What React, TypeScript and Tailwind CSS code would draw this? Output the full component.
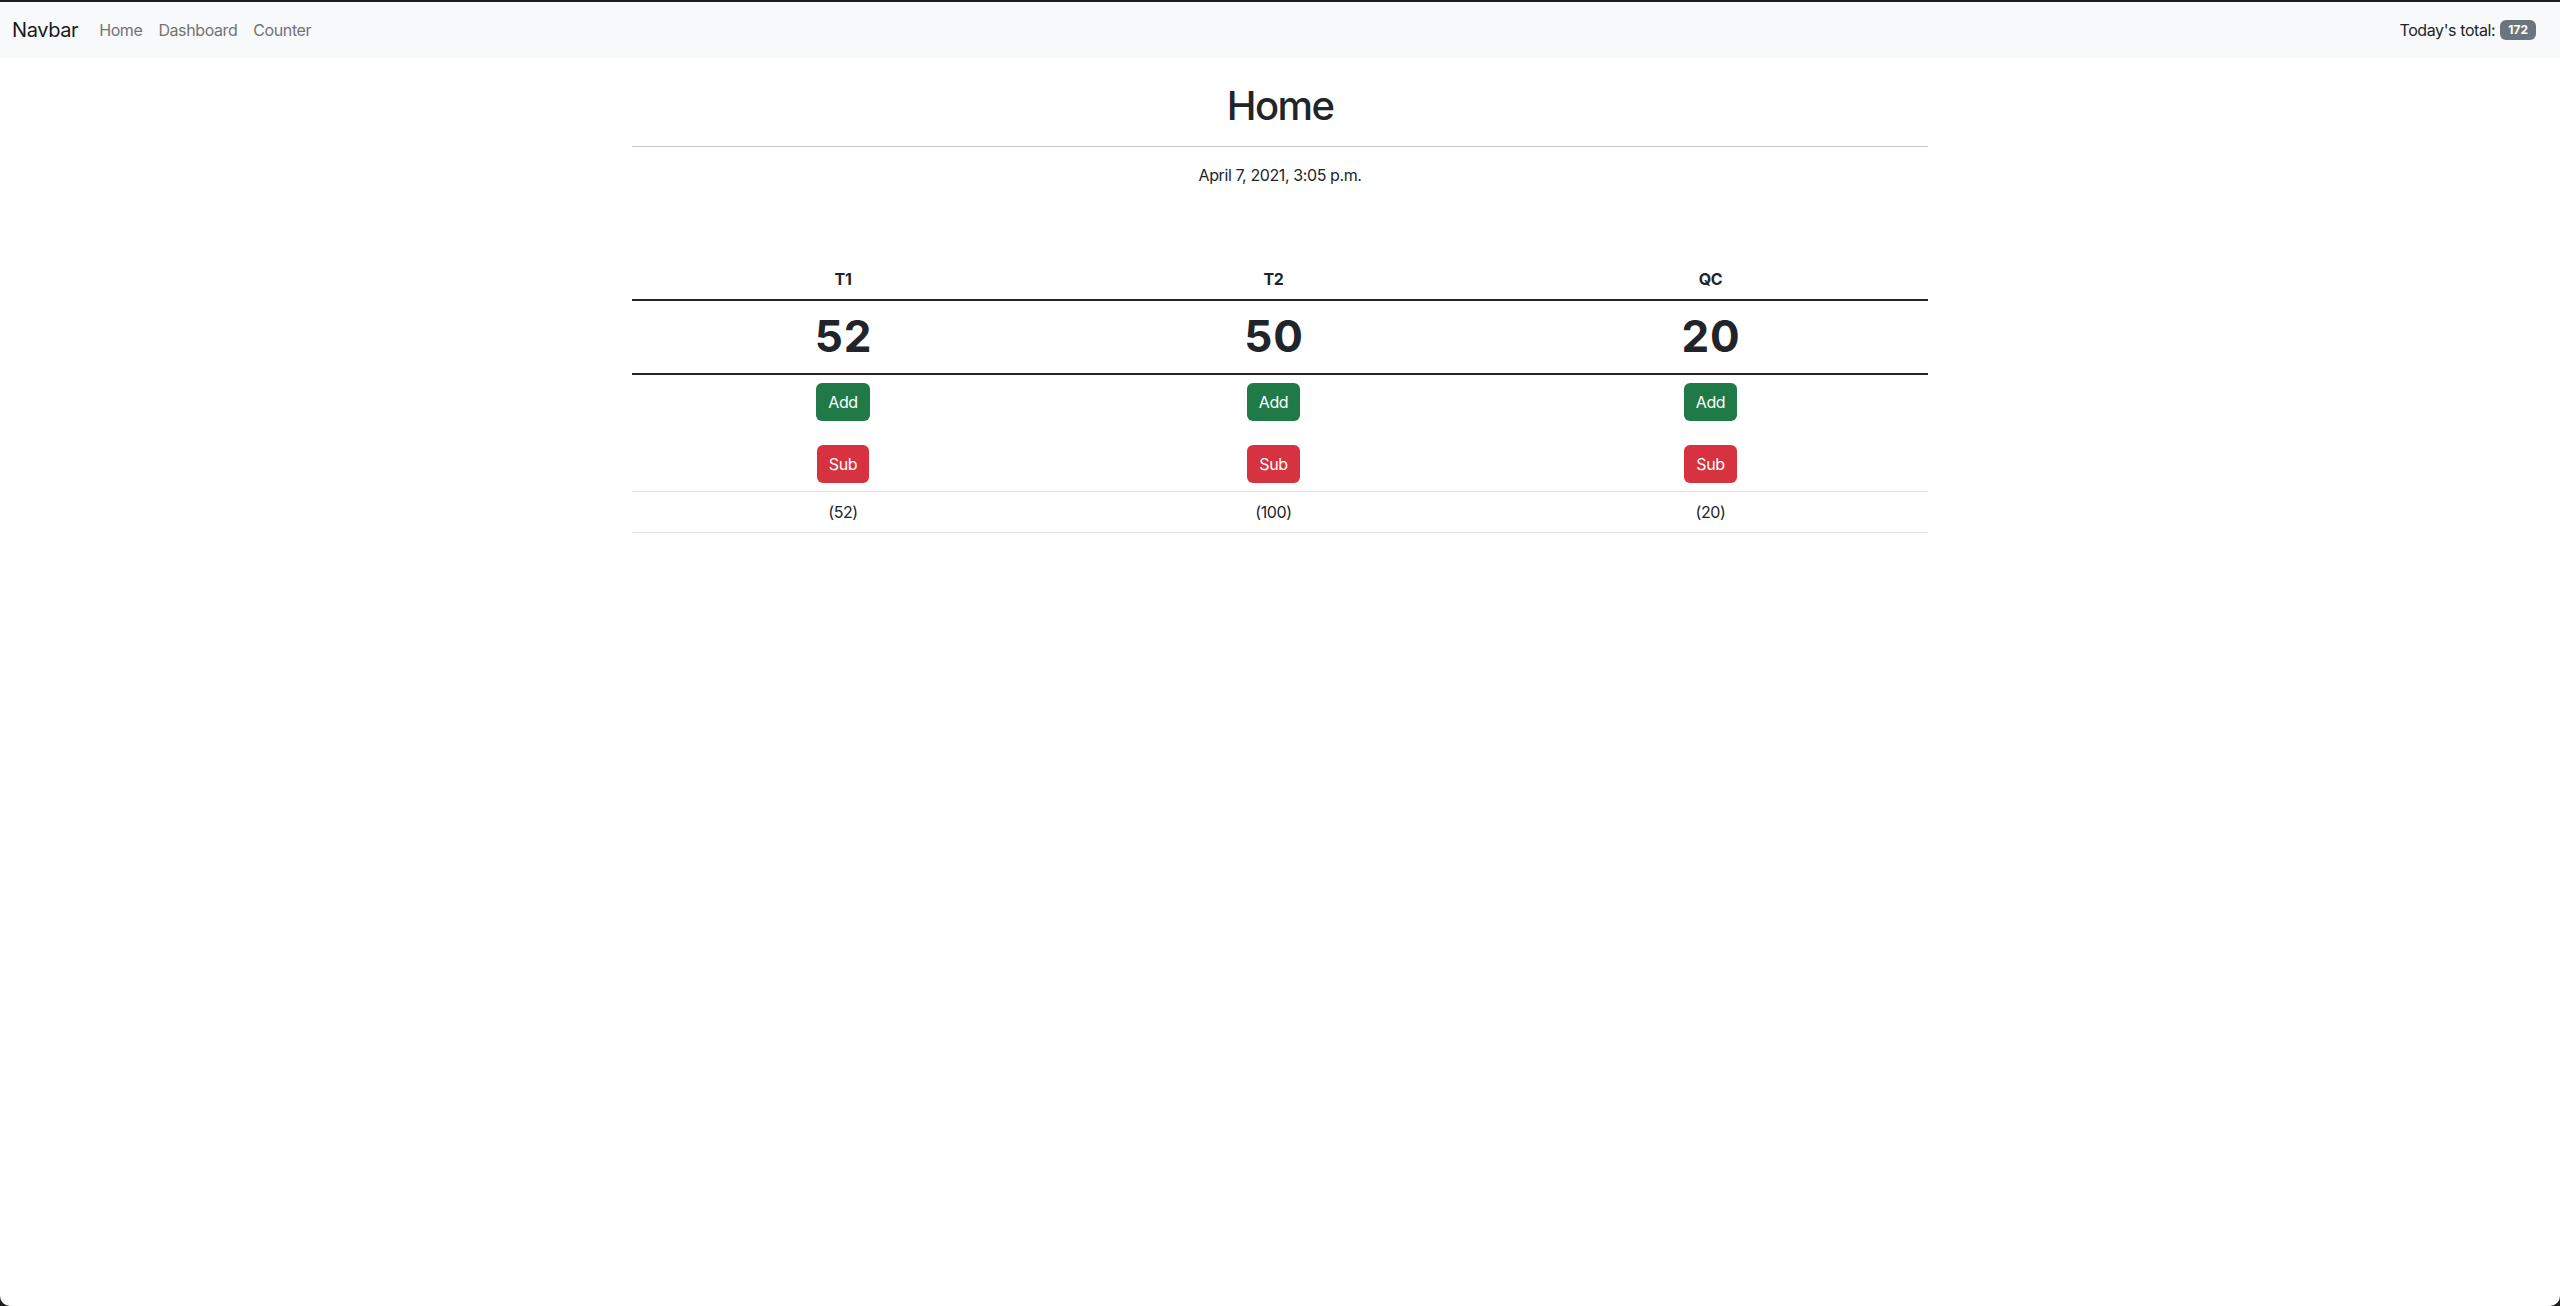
import React, { useState } from 'react';

type Counter = { label: string; value: number; total: number };

const initial: Counter[] = [
  { label: 'T1', value: 52, total: 52 },
  { label: 'T2', value: 50, total: 100 },
  { label: 'QC', value: 20, total: 20 },
];

const Navbar: React.FC<{ total: number }> = ({ total }) => (
  <nav className="flex h-[56px] items-center justify-between bg-[#f8f9fa] pl-3 pr-6">
    <div className="flex items-center">
      <a className="mr-[13px] text-[20px] leading-[30px] text-[#1a1a1a]">Navbar</a>
      {['Home', 'Dashboard', 'Counter'].map(link => (
        <a key={link} className="px-2 text-base leading-6 text-[#737373]">
          {link}
        </a>
      ))}
    </div>
    <div className="flex items-center text-base leading-6 text-[#212529]">
      Today's total:
      <span className="ml-[5px] inline-flex h-[20px] items-center rounded-[6px] bg-[#6c757d] px-[8px] text-[12px] font-bold leading-none tracking-normal text-white">
        {total}
      </span>
    </div>
  </nav>
);

export default function App() {
  const [counters, setCounters] = useState<Counter[]>(initial);
  const total = counters.reduce((s, c) => s + c.total, 0);

  const bump = (i: number, d: number) =>
    setCounters(cs => cs.map((c, j) => (j === i ? { ...c, value: c.value + d } : c)));

  return (
    <div className="h-[1306px] bg-[#1e1e1e] pt-[2px] font-['Inter',sans-serif] tracking-[-0.025em] text-[#212529]">
      <div className="h-[1304px] overflow-hidden rounded-b-[10px] bg-white">
        <Navbar total={total} />
        <main className="mx-auto w-[1296px] text-center">
          <h1 className="mt-6 text-[40px] font-medium leading-[48px] tracking-[-0.04em]">Home</h1>
          <hr className="mt-4 mb-4 border-t border-[#c8c9ca]" />
          <p className="text-base leading-6">April 7, 2021, 3:05 p.m.</p>

          <div className="mt-[72px] grid grid-cols-[422px_439px_435px] text-base leading-6">
            {counters.map(c => (
              <div key={c.label} className="border-b-2 border-[#212529] px-2 py-2 font-bold">
                {c.label}
              </div>
            ))}
            {counters.map(c => (
              <div key={c.label} className="border-b-2 border-[#212529] px-2 pt-[11px] pb-[13px]">
                <h1 className="pl-[1px] text-[44px] font-bold leading-[48px] tracking-[0.02em]">{c.value}</h1>
              </div>
            ))}
            {counters.map((c, i) => (
              <div key={c.label} className="flex flex-col items-center gap-6 border-b border-[#dee2e6] px-2 py-2">
                <button
                  onClick={() => bump(i, 1)}
                  className="h-[38px] rounded-[6px] bg-[#1f7a48] px-3 text-base leading-6 text-white"
                >
                  Add
                </button>
                <button
                  onClick={() => bump(i, -1)}
                  className="h-[38px] rounded-[6px] bg-[#d6323f] px-3 text-base leading-6 text-white"
                >
                  Sub
                </button>
              </div>
            ))}
            {counters.map(c => (
              <div key={c.label} className="border-b border-[#dee2e6] px-2 py-2">
                ({c.total})
              </div>
            ))}
          </div>
        </main>
      </div>
    </div>
  );
}
